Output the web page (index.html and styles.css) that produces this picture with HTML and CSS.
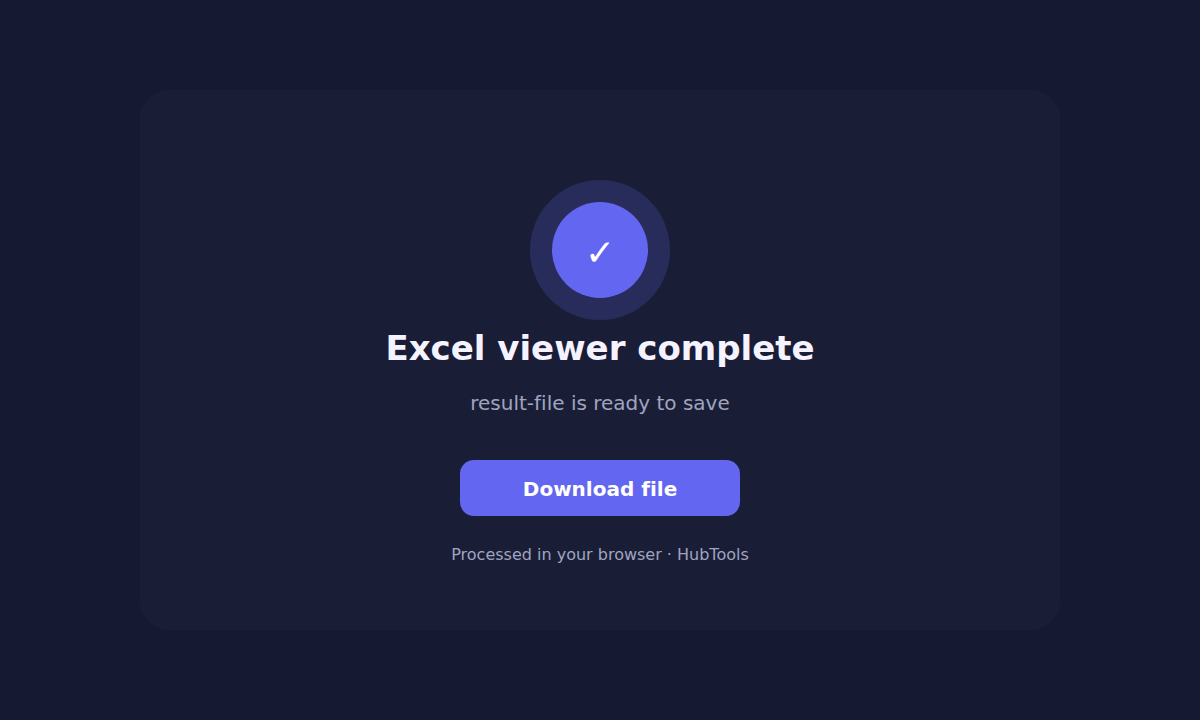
FILE: index.html
```html
<!DOCTYPE html>
<html lang="en">

<head>
  <meta charset="UTF-8">
  <meta name="viewport" content="width=device-width, initial-scale=1.0">
  <title>Excel viewer - HubTools</title>
  <link rel="stylesheet" href="styles.css">
</head>

<body>
  <main class="result-card">
    <div class="status">
      <span class="status-icon">✓</span>
    </div>
    <h1>Excel viewer complete</h1>
    <p class="message">result-file is ready to save</p>
    <button type="button" class="download-btn">Download file</button>
    <p class="note">Processed in your browser · HubTools</p>
  </main>
</body>

</html>
```

FILE: styles.css
```css
* {
  box-sizing: border-box;
}

body {
  font-family: "DejaVu Sans", sans-serif;
  font-variant-ligatures: none;
  background-color: #151932;
  color: #f5f3ff;
  display: flex;
  justify-content: center;
  align-items: center;
  min-height: 100vh;
  margin: 0;
  padding: 40px 20px;
}

.result-card {
  display: flex;
  flex-direction: column;
  align-items: center;
  width: 100%;
  max-width: 920px;
  padding: 90px 40px 64px;
  background-color: #191e36;
  border-radius: 28px;
  text-align: center;
}

.status {
  display: flex;
  padding: 22px;
  background-color: #282c5b;
  border-radius: 50%;
}

.status-icon {
  display: flex;
  justify-content: center;
  align-items: center;
  width: 96px;
  height: 96px;
  padding-top: 4px;
  background-color: #6366f1;
  border-radius: 50%;
  color: white;
  font-size: 36px;
}

h1 {
  margin: 8px 0 20px;
  font-size: 34px;
  line-height: 40px;
}

.message {
  margin: 0 0 42px;
  color: #a0a4c0;
  font-size: 20px;
  line-height: 30px;
}

.download-btn {
  width: 280px;
  height: 56px;
  padding: 2px 0 0;
  border: none;
  border-radius: 14px;
  background-color: #6366f1;
  color: white;
  font-family: inherit;
  font-size: 20px;
  font-weight: bold;
  font-variant-ligatures: none;
  cursor: pointer;
}

.download-btn:hover {
  background-color: #5558e8;
}

.note {
  margin: 28px 0 0;
  color: #a0a4c0;
  font-size: 16px;
  line-height: 22px;
}
```
